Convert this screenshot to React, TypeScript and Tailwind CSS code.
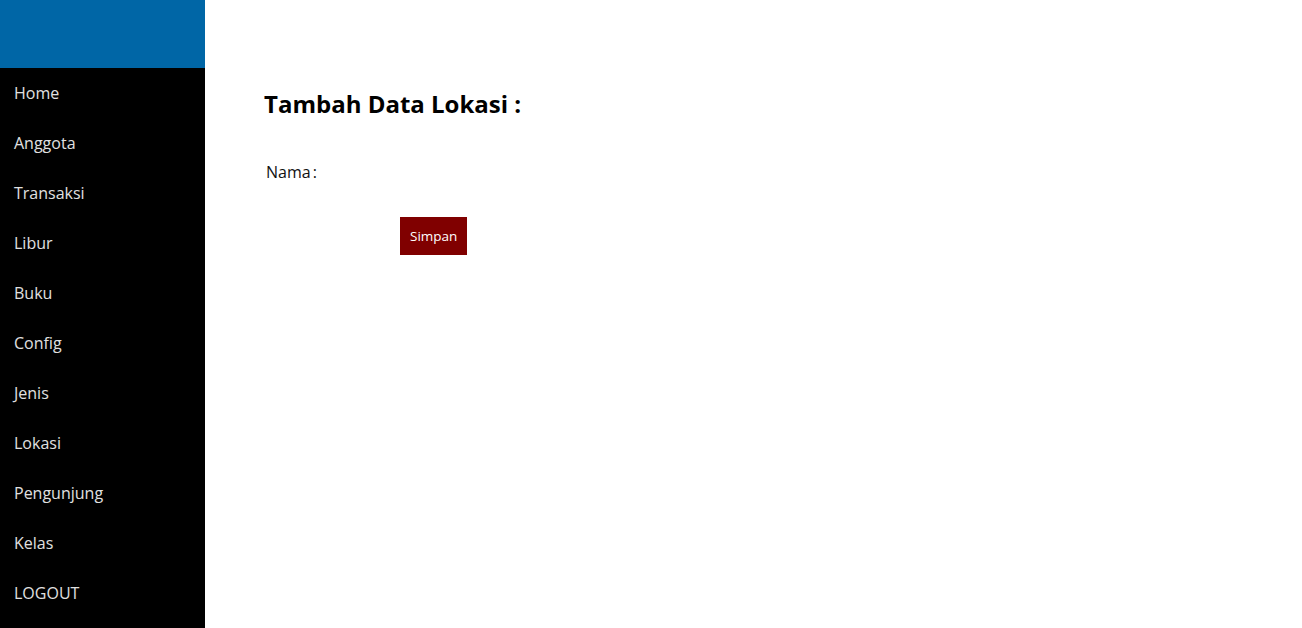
import React from "react";

const menuItems = [
  "Home",
  "Anggota",
  "Transaksi",
  "Libur",
  "Buku",
  "Config",
  "Jenis",
  "Lokasi",
  "Pengunjung",
  "Kelas",
  "LOGOUT",
];

const App: React.FC = () => {
  return (
    <div
      className="flex min-h-[628px] bg-white"
      style={{ fontFamily: '"Open Sans", sans-serif' }}
    >
      {/* sidebar */}
      <aside className="w-[205px] shrink-0 bg-black">
        <div className="h-[68px] bg-[#0066a6]" />
        <ul>
          {menuItems.map((item) => (
            <li
              key={item}
              className="h-[50px] flex items-center px-[14px] text-[16px] text-[#e0e0e0]"
            >
              {item}
            </li>
          ))}
        </ul>
      </aside>

      {/* content */}
      <main className="flex-1 pl-[59px] pt-[88px]">
        <h2 className="text-[24px] leading-[32px] font-bold text-black">
          Tambah Data Lokasi :
        </h2>
        <div className="mt-[40px] flex items-center pl-[2px] text-[16px] leading-[24px] text-[#111]">
          <span>Nama</span>
          <span className="ml-[2px]">:</span>
        </div>
        <div className="mt-[33px] pl-[136px]">
          <button className="h-[38px] px-[10px] bg-[#800000] text-white text-[13.5px]">
            Simpan
          </button>
        </div>
      </main>
    </div>
  );
};

export default App;
